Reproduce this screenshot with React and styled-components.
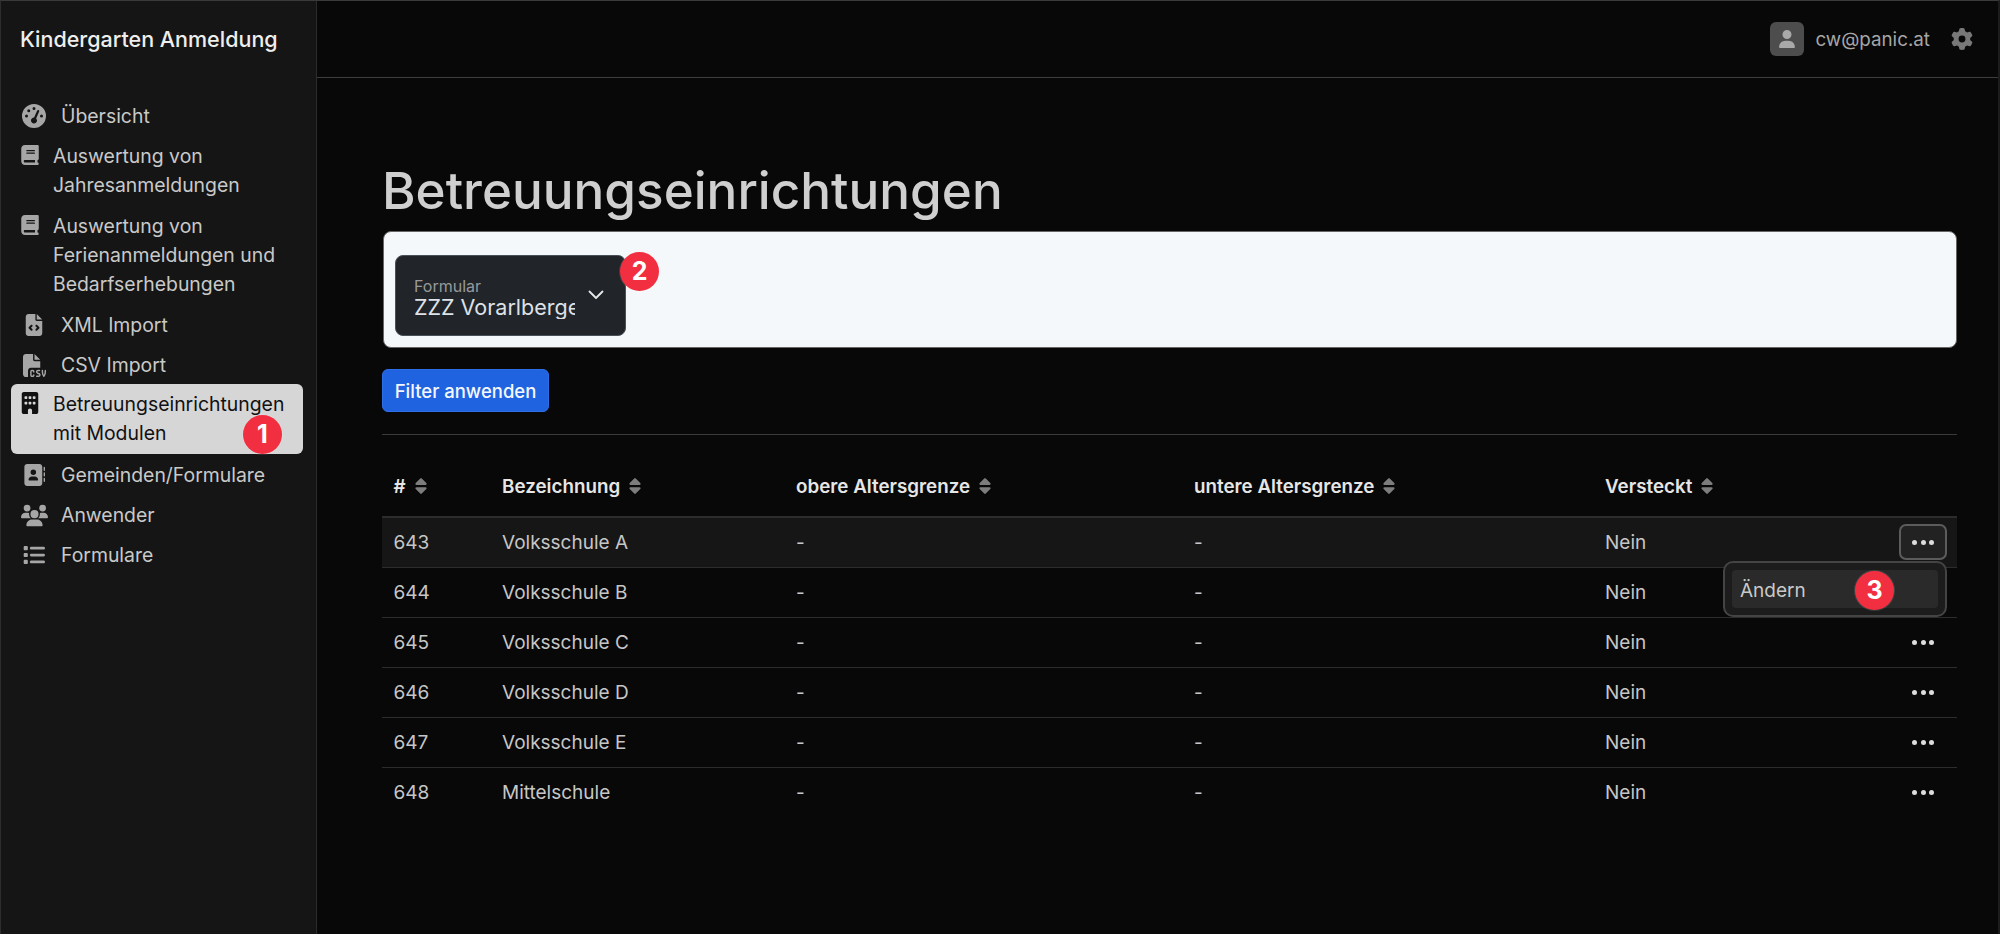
import React from "react";
import styled, { createGlobalStyle } from "styled-components";
import { FaGaugeHigh, FaBook, FaFileCode, FaFileCsv, FaBuilding, FaAddressBook, FaUsers, FaList, FaGear, FaUser, FaSort } from "react-icons/fa6";

const Global = createGlobalStyle`
  html, body { margin: 0; padding: 0; background: #080808; }
  body { font-family: Inter, "Liberation Sans", sans-serif; font-size: 19px; color: #ccc; }
  * { box-sizing: border-box; }
`;
const Shell = styled.div`
  display: flex; width: 2000px; height: 934px; overflow: hidden;
  border-top: 1px solid #3a3a3a; border-left: 1px solid #2e2e2e; border-right: 2px solid #1c1c1c;
  background: #080808;
`;
const Sidebar = styled.aside`
  width: 316px; flex: none; background: #151515; border-right: 1px solid #2b2b2b;
  padding: 0 13px 0 10px; 
`;
const Brand = styled.div`
  height: 95px; padding: 23px 0 0 9px; font-size: 21.5px; line-height: 30px; font-weight: 500; color: #eee;
  white-space: nowrap;
`;
const Nav = styled.nav`display: flex; flex-direction: column;`;
const NavItem = styled.a`
  position: relative; display: flex; align-items: flex-start;
  padding: ${p => (p.$multi ? "6px 0 6px 9px" : "5.5px 0 5.5px 9px")};
  margin: ${p => (p.$active ? "-1px 0 1px" : "0")};
  gap: 13px;
  line-height: 29px; font-size: 19.4px; border-radius: 6px;
  color: ${p => (p.$active ? "#111" : "#c9c9c9")};
  background: ${p => (p.$active ? "#d6d6d6" : "transparent")};
`;
const NavIcon = styled.span`
  flex: none; width: ${p => (p.$multi ? "20px" : "28px")}; height: 29px;
  display: flex; align-items: center; justify-content: center;
  color: ${p => (p.$active ? "#111" : "#a6a6a6")}; font-size: ${p => p.$size || 22}px;
  margin-top: ${p => (p.$multi ? "-2px" : "0")};
`;
const Badge = styled.span`
  position: absolute; width: 39px; height: 39px; border-radius: 50%;
  background: #f22f40; color: #fff; font-weight: 700; font-size: 25px; line-height: 39px; text-align: center;
  box-shadow: 0 0 0 1px rgba(255,255,255,.12);
  left: ${p => p.$left}px; top: ${p => p.$top}px;
`;
const Main = styled.main`flex: 1; min-width: 0; display: flex; flex-direction: column;`;
const Topbar = styled.header`
  height: 77px; flex: none; border-bottom: 1px solid #3d3d3d; display: flex; align-items: center;
  justify-content: flex-end; padding: 0 25px 0 0;
`;
const Avatar = styled.span`
  width: 34px; height: 34px; border-radius: 6px; background: #4d4d4d; color: #a9a9a9;
  display: flex; align-items: center; justify-content: center; font-size: 18px; margin-right: 11px;
`;
const Email = styled.span`color: #a6a6a6; font-size: 18.8px; margin-right: 21px;`;
const Gear = styled.span`color: #787878; font-size: 22px; display: flex;`;
const Content = styled.div`padding: 0 41px 0 65px;`;
const Title = styled.h1`
  margin: 73px 0 0; padding-bottom: 2px; font-size: 51.2px; line-height: 78px; font-weight: 500; color: #cfcfcf;
`;
const FilterPanel = styled.div`
  margin: 0 0 0 1px; height: 117px; background: #f5f8fb; border: 1px solid #666; border-radius: 8px;
  padding: 23px 11px;
`;
const Select = styled.div`
  position: relative; width: 231px; height: 81px; background: #212529; border: 1px solid #495057; border-radius: 8px;
  padding: 20px 0 0 18px;
`;
const SelectLabel = styled.div`font-size: 16px; line-height: 18px; color: #98999b; margin-top: 1px;`;
const SelectValue = styled.div`
  width: 161px; overflow: hidden; white-space: nowrap; font-size: 21.5px; line-height: 24px; color: #dee2e6;
`;
const Chevron = styled.svg`position: absolute; right: 19px; top: 29px; width: 20px; height: 20px;`;
const FilterButton = styled.button`
  display: block; margin-top: 21px; width: 167px; height: 43px; background: #1f63e0; border: 1px solid #2f6fe6; border-radius: 6px;
  color: #f4f7fd; font: 500 18.5px Inter, sans-serif; padding: 0;
`;
const Divider = styled.hr`margin: 22px 0 0; border: 0; border-top: 1px solid #3a3a3a;`;
const Table = styled.table`
  margin-top: 0; width: 100%; border-collapse: collapse; table-layout: fixed;
`;
const HeadCell = styled.th`
  height: 82px; text-align: left; padding: 22px 0 0 11.5px; font-weight: 600; font-size: 18.8px; color: #e6e6e6;
  border-bottom: 2px solid #2c2c2c; width: ${p => p.$w}px; white-space: nowrap;
`;
const SortIcon = styled(FaSort)`color: #7d7d7d; font-size: 18px; margin-left: 6px; vertical-align: -2px;`;
const Row = styled.tr`background: ${p => (p.$active ? "#161616" : "transparent")};`;
const Cell = styled.td`
  height: 50px; padding: 0 0 0 11.5px; font-size: 19px; color: #c6c6c6;
  border-bottom: ${p => (p.$last ? "0" : "1px solid #2c2c2c")};
`;
const ActionCell = styled(Cell)`position: relative; padding: 0; text-align: right;`;
const DotsButton = styled.span`
  display: inline-flex; align-items: center; justify-content: center; gap: 3.5px;
  width: 48px; height: 36px; margin-right: 10px; vertical-align: middle; border-radius: 7px;
  border: 2px solid ${p => (p.$open ? "#5c5c5c" : "transparent")};
  background: ${p => (p.$open ? "#222" : "transparent")};
`;
const Dot = styled.i`width: 5px; height: 5px; border-radius: 50%; background: #ddd; display: block;`;
const Menu = styled.div`
  position: absolute; z-index: 2; right: 10px; top: 43px; width: 224px; height: 56px; padding: 7px;
  background: #1c1c1c; border: 2px solid #444; border-radius: 10px;
`;
const MenuItem = styled.div`
  height: 38px; background: #2a2a2a; border-radius: 4px; padding-left: 8px; line-height: 41px; text-align: left; color: #c9c9c9;
  font-size: 19px;
`;

const navItems = [
  { icon: FaGaugeHigh, text: "Übersicht", size: 24 },
  { icon: FaBook, text: <>Auswertung von<br />Jahresanmeldungen</>, multi: true, size: 20 },
  { icon: FaBook, text: <>Auswertung von<br />Ferienanmeldungen und<br />Bedarfserhebungen</>, multi: true, size: 20 },
  { icon: FaFileCode, text: "XML Import", size: 22 },
  { icon: FaFileCsv, text: "CSV Import", size: 23 },
  { icon: FaBuilding, text: <>Betreuungseinrichtungen<br />mit Modulen</>, multi: true, active: true, size: 22, badge: 1 },
  { icon: FaAddressBook, text: "Gemeinden/Formulare", size: 22 },
  { icon: FaUsers, text: "Anwender", size: 27 },
  { icon: FaList, text: "Formulare", size: 22 },
];
const rows = [
  ["643", "Volksschule A"], ["644", "Volksschule B"], ["645", "Volksschule C"],
  ["646", "Volksschule D"], ["647", "Volksschule E"], ["648", "Mittelschule"],
];
const heads = [["#", 108.5], ["Bezeichnung", 294], ["obere Altersgrenze", 398], ["untere Altersgrenze", 411], ["Versteckt", 260]];

export default function App() {
  return (
    <Shell>
      <Global />
      <Sidebar>
        <Brand>Kindergarten Anmeldung</Brand>
        <Nav>
          {navItems.map((n, i) => {
            const I = n.icon;
            return (
              <NavItem key={i} $multi={n.multi} $active={n.active}>
                <NavIcon $multi={n.multi} $active={n.active} $size={n.size}><I /></NavIcon>
                <span>{n.text}</span>
                {n.badge && <Badge $left={232} $top={31}>{n.badge}</Badge>}
              </NavItem>
            );
          })}
        </Nav>
      </Sidebar>
      <Main>
        <Topbar>
          <Avatar><FaUser /></Avatar>
          <Email>cw@panic.at</Email>
          <Gear><FaGear /></Gear>
        </Topbar>
        <Content>
          <Title>Betreuungseinrichtungen</Title>
          <FilterPanel>
            <Select>
              <SelectLabel>Formular</SelectLabel>
              <SelectValue>ZZZ Vorarlberger Gemeinde</SelectValue>
              <Chevron viewBox="0 0 20 20" fill="none" stroke="#e8e8e8" strokeWidth="1.8" strokeLinecap="round" strokeLinejoin="round">
                <path d="M3.5 6.5 L10 13 L16.5 6.5" />
              </Chevron>
              <Badge $left={224} $top={-4}>2</Badge>
            </Select>
          </FilterPanel>
          <FilterButton>Filter anwenden</FilterButton>
          <Divider />
          <Table>
            <thead>
              <tr>
                {heads.map(([h, w]) => <HeadCell key={h} $w={w}>{h}<SortIcon /></HeadCell>)}
                <HeadCell $w={103.5} />
              </tr>
            </thead>
            <tbody>
              {rows.map(([id, name], i) => {
                const last = i === rows.length - 1;
                return (
                  <Row key={id} $active={i === 0}>
                    <Cell $last={last}>{id}</Cell>
                    <Cell $last={last}>{name}</Cell>
                    <Cell $last={last}>-</Cell>
                    <Cell $last={last}>-</Cell>
                    <Cell $last={last}>Nein</Cell>
                    <ActionCell $last={last}>
                      <DotsButton $open={i === 0}><Dot /><Dot /><Dot /></DotsButton>
                      {i === 0 && (
                        <Menu>
                          <MenuItem>Ändern</MenuItem>
                          <Badge $left={130} $top={8}>3</Badge>
                        </Menu>
                      )}
                    </ActionCell>
                  </Row>
                );
              })}
            </tbody>
          </Table>
        </Content>
      </Main>
    </Shell>
  );
}
